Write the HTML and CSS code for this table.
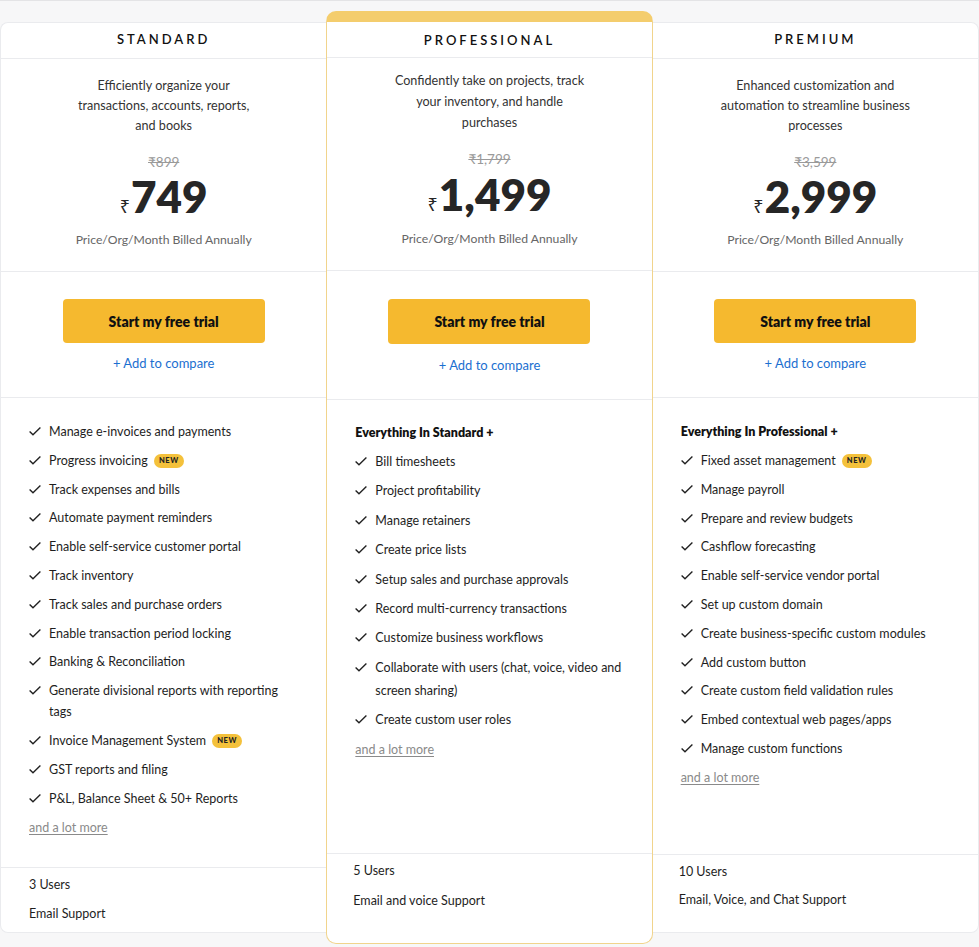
FILE: index.html
```html
<!DOCTYPE html>
<html lang="en">
<head>
<meta charset="utf-8">
<title>Pricing</title>
<link rel="stylesheet" href="styles.css">
</head>
<body>
<div class="topline"></div>
<div class="plans">
  <section class="card card--standard">
    <div class="card-head">STANDARD</div>
    <div class="price-block">
      <p class="desc">Efficiently organize your<br>transactions, accounts, reports,<br>and books</p>
      <div class="old-price">₹899</div>
      <div class="price"><span class="cur">₹</span>749</div>
      <div class="billing">Price/Org/Month Billed Annually</div>
    </div>
    <div class="cta">
      <a class="btn" href="#">Start my free trial</a>
      <a class="compare" href="#">+ Add to compare</a>
    </div>
    <div class="features">
      <ul class="list">
        <li><svg class="chk" viewBox="0 0 12 9"><path d="M0.6 4.4 L4 7.8 L11.4 0.6"/></svg>Manage e-invoices and payments</li>
        <li><svg class="chk" viewBox="0 0 12 9"><path d="M0.6 4.4 L4 7.8 L11.4 0.6"/></svg>Progress invoicing<span class="badge">NEW</span></li>
        <li><svg class="chk" viewBox="0 0 12 9"><path d="M0.6 4.4 L4 7.8 L11.4 0.6"/></svg>Track expenses and bills</li>
        <li><svg class="chk" viewBox="0 0 12 9"><path d="M0.6 4.4 L4 7.8 L11.4 0.6"/></svg>Automate payment reminders</li>
        <li><svg class="chk" viewBox="0 0 12 9"><path d="M0.6 4.4 L4 7.8 L11.4 0.6"/></svg>Enable self-service customer portal</li>
        <li><svg class="chk" viewBox="0 0 12 9"><path d="M0.6 4.4 L4 7.8 L11.4 0.6"/></svg>Track inventory</li>
        <li><svg class="chk" viewBox="0 0 12 9"><path d="M0.6 4.4 L4 7.8 L11.4 0.6"/></svg>Track sales and purchase orders</li>
        <li><svg class="chk" viewBox="0 0 12 9"><path d="M0.6 4.4 L4 7.8 L11.4 0.6"/></svg>Enable transaction period locking</li>
        <li><svg class="chk" viewBox="0 0 12 9"><path d="M0.6 4.4 L4 7.8 L11.4 0.6"/></svg>Banking &amp; Reconciliation</li>
        <li><svg class="chk" viewBox="0 0 12 9"><path d="M0.6 4.4 L4 7.8 L11.4 0.6"/></svg><span>Generate divisional reports with reporting<br>tags</span></li>
        <li><svg class="chk" viewBox="0 0 12 9"><path d="M0.6 4.4 L4 7.8 L11.4 0.6"/></svg>Invoice Management System<span class="badge">NEW</span></li>
        <li><svg class="chk" viewBox="0 0 12 9"><path d="M0.6 4.4 L4 7.8 L11.4 0.6"/></svg>GST reports and filing</li>
        <li><svg class="chk" viewBox="0 0 12 9"><path d="M0.6 4.4 L4 7.8 L11.4 0.6"/></svg>P&amp;L, Balance Sheet &amp; 50+ Reports</li>
      </ul>
      <a class="more" href="#">and a lot more</a>
    </div>
    <div class="foot">
      <div>3 Users</div>
      <div>Email Support</div>
    </div>
  </section>

  <section class="card card--pro">
    <div class="card-head">PROFESSIONAL</div>
    <div class="price-block">
      <p class="desc">Confidently take on projects, track<br>your inventory, and handle<br>purchases</p>
      <div class="old-price">₹1,799</div>
      <div class="price"><span class="cur">₹</span>1,499</div>
      <div class="billing">Price/Org/Month Billed Annually</div>
    </div>
    <div class="cta">
      <a class="btn" href="#">Start my free trial</a>
      <a class="compare" href="#">+ Add to compare</a>
    </div>
    <div class="features">
      <div class="feat-title">Everything In Standard +</div>
      <ul class="list">
        <li><svg class="chk" viewBox="0 0 12 9"><path d="M0.6 4.4 L4 7.8 L11.4 0.6"/></svg>Bill timesheets</li>
        <li><svg class="chk" viewBox="0 0 12 9"><path d="M0.6 4.4 L4 7.8 L11.4 0.6"/></svg>Project profitability</li>
        <li><svg class="chk" viewBox="0 0 12 9"><path d="M0.6 4.4 L4 7.8 L11.4 0.6"/></svg>Manage retainers</li>
        <li><svg class="chk" viewBox="0 0 12 9"><path d="M0.6 4.4 L4 7.8 L11.4 0.6"/></svg>Create price lists</li>
        <li><svg class="chk" viewBox="0 0 12 9"><path d="M0.6 4.4 L4 7.8 L11.4 0.6"/></svg>Setup sales and purchase approvals</li>
        <li><svg class="chk" viewBox="0 0 12 9"><path d="M0.6 4.4 L4 7.8 L11.4 0.6"/></svg>Record multi-currency transactions</li>
        <li><svg class="chk" viewBox="0 0 12 9"><path d="M0.6 4.4 L4 7.8 L11.4 0.6"/></svg>Customize business workflows</li>
        <li><svg class="chk" viewBox="0 0 12 9"><path d="M0.6 4.4 L4 7.8 L11.4 0.6"/></svg><span>Collaborate with users (chat, voice, video and<br>screen sharing)</span></li>
        <li><svg class="chk" viewBox="0 0 12 9"><path d="M0.6 4.4 L4 7.8 L11.4 0.6"/></svg>Create custom user roles</li>
      </ul>
      <a class="more" href="#">and a lot more</a>
    </div>
    <div class="foot">
      <div>5 Users</div>
      <div>Email and voice Support</div>
    </div>
  </section>

  <section class="card card--premium">
    <div class="card-head">PREMIUM</div>
    <div class="price-block">
      <p class="desc">Enhanced customization and<br>automation to streamline business<br>processes</p>
      <div class="old-price">₹3,599</div>
      <div class="price"><span class="cur">₹</span>2,999</div>
      <div class="billing">Price/Org/Month Billed Annually</div>
    </div>
    <div class="cta">
      <a class="btn" href="#">Start my free trial</a>
      <a class="compare" href="#">+ Add to compare</a>
    </div>
    <div class="features">
      <div class="feat-title">Everything In Professional +</div>
      <ul class="list">
        <li><svg class="chk" viewBox="0 0 12 9"><path d="M0.6 4.4 L4 7.8 L11.4 0.6"/></svg>Fixed asset management<span class="badge">NEW</span></li>
        <li><svg class="chk" viewBox="0 0 12 9"><path d="M0.6 4.4 L4 7.8 L11.4 0.6"/></svg>Manage payroll</li>
        <li><svg class="chk" viewBox="0 0 12 9"><path d="M0.6 4.4 L4 7.8 L11.4 0.6"/></svg>Prepare and review budgets</li>
        <li><svg class="chk" viewBox="0 0 12 9"><path d="M0.6 4.4 L4 7.8 L11.4 0.6"/></svg>Cashflow forecasting</li>
        <li><svg class="chk" viewBox="0 0 12 9"><path d="M0.6 4.4 L4 7.8 L11.4 0.6"/></svg>Enable self-service vendor portal</li>
        <li><svg class="chk" viewBox="0 0 12 9"><path d="M0.6 4.4 L4 7.8 L11.4 0.6"/></svg>Set up custom domain</li>
        <li><svg class="chk" viewBox="0 0 12 9"><path d="M0.6 4.4 L4 7.8 L11.4 0.6"/></svg>Create business-specific custom modules</li>
        <li><svg class="chk" viewBox="0 0 12 9"><path d="M0.6 4.4 L4 7.8 L11.4 0.6"/></svg>Add custom button</li>
        <li><svg class="chk" viewBox="0 0 12 9"><path d="M0.6 4.4 L4 7.8 L11.4 0.6"/></svg>Create custom field validation rules</li>
        <li><svg class="chk" viewBox="0 0 12 9"><path d="M0.6 4.4 L4 7.8 L11.4 0.6"/></svg>Embed contextual web pages/apps</li>
        <li><svg class="chk" viewBox="0 0 12 9"><path d="M0.6 4.4 L4 7.8 L11.4 0.6"/></svg>Manage custom functions</li>
      </ul>
      <a class="more" href="#">and a lot more</a>
    </div>
    <div class="foot">
      <div>10 Users</div>
      <div>Email, Voice, and Chat Support</div>
    </div>
  </section>
</div>
</body>
</html>
```

FILE: styles.css
```css
* { box-sizing: border-box; }

html, body {
  margin: 0;
  padding: 0;
  background: #f7f7f8;
  font-family: "Lato", "Noto Sans", sans-serif;
  color: #222;
  font-size: 12.5px;
}

.topline {
  height: 1px;
  background: #e4e4e6;
}

.plans {
  display: grid;
  grid-template-columns: repeat(3, 1fr);
  align-items: start;
  padding-top: 21px;
}

.card {
  background: #fff;
  border: 1px solid #eaebee;
  height: 911px;
  display: flex;
  flex-direction: column;
}

.card--standard { border-radius: 8px 0 0 8px; border-right: none; }
.card--premium { border-radius: 0 8px 8px 0; border-left: none; }

.card--pro {
  margin-top: -11px;
  height: 933px;
  border: 1.5px solid #f1d48c;
  border-top: 11px solid #f4cd6d;
  border-radius: 10px;
  position: relative;
  z-index: 1;
}

.card-head {
  text-align: center;
  font-size: 13px;
  font-weight: 600;
  letter-spacing: 3px;
  line-height: 18px;
  padding: 7px 0 10px;
  border-bottom: 1px solid #eaebee;
  color: #111;
}

.card--pro .card-head { padding: 9px 0 8px; }

.price-block {
  text-align: center;
  padding: 17px 0 22px;
  border-bottom: 1px solid #eaebee;
}

.desc {
  margin: 0;
  font-size: 12.6px;
  line-height: 20px;
  color: #333;
}

.card--pro .price-block { padding-top: 12px; }
.card--pro .desc { line-height: 21px; }

.old-price {
  margin-top: 17px;
  font-size: 13.5px;
  line-height: 18px;
  color: #9a9a9a;
  text-decoration: line-through;
}

.price {
  margin-top: 3px;
  font-size: 44px;
  line-height: 44px;
  height: 44px;
  font-weight: 800;
  color: #262626;
}

.card--pro .price { margin-top: 4px; }

.cur {
  font-size: 18px;
  line-height: 0;
  font-weight: 400;
  margin-right: 1px;
  font-family: "Noto Sans", sans-serif;
}

.billing {
  margin-top: 13px;
  font-size: 12.2px;
  line-height: 18px;
  color: #666;
}

.card--pro .billing { margin-top: 14px; }

.cta {
  display: flex;
  flex-direction: column;
  align-items: center;
  padding: 27px 0 25px;
  border-bottom: 1px solid #eaebee;
}

.btn {
  width: 202px;
  height: 44px;
  background: #f5b92f;
  border-radius: 4px;
  display: flex;
  align-items: center;
  justify-content: center;
  font-weight: 800;
  font-size: 14px;
  color: #111;
  text-decoration: none;
}

.card--pro .cta { padding-top: 28px; }
.card--pro .btn { height: 45px; }

.compare {
  margin-top: 11px;
  font-size: 13px;
  line-height: 18px;
  color: #1b6fd0;
  text-decoration: none;
}

.card--pro .compare { margin-top: 12px; }

.features {
  flex: 1;
  padding: 23px 10px 0 28px;
}

.card--pro .features { padding-top: 22px; }

.feat-title {
  font-weight: 800;
  line-height: 21px;
  margin-bottom: 8px;
  color: #111;
}

.list {
  list-style: none;
  margin: 0;
  padding: 0;
  display: flex;
  flex-direction: column;
  gap: 7.8px;
}

.list li {
  display: flex;
  align-items: flex-start;
  line-height: 21px;
  color: #1e1e1e;
}

.card--pro .feat-title { margin-bottom: 7px; }
.card--pro .list { gap: 6.4px; }
.card--pro .list li { line-height: 23px; }

.chk {
  flex: none;
  width: 12px;
  height: 9px;
  margin: 6px 8px 0 0;
  fill: none;
  stroke: #222;
  stroke-width: 1.4;
}

.card--pro .chk { margin-top: 7px; }

.badge {
  display: inline-flex;
  align-items: center;
  justify-content: center;
  width: 30px;
  height: 14px;
  margin: 4px 0 0 6px;
  border-radius: 7px;
  background: #f4c13b;
  font-size: 7.5px;
  font-weight: 900;
  letter-spacing: 0.6px;
  line-height: 14px;
  color: #222;
}

.more {
  display: inline-block;
  margin-top: 8px;
  line-height: 21px;
  color: #8a8a8a;
  text-decoration: underline;
  text-underline-offset: 2px;
}

.card--pro .more { margin-top: 6.4px; line-height: 23px; }

.foot {
  border-top: 1px solid #eaebee;
  padding: 8px 28px 9px;
  display: flex;
  flex-direction: column;
  gap: 11px;
  line-height: 18px;
  color: #1e1e1e;
}

.card--pro .foot { padding: 8px 26px 33px; gap: 12px; }
.card--premium .foot { padding: 8px 26px 23px; gap: 10px; }
```
